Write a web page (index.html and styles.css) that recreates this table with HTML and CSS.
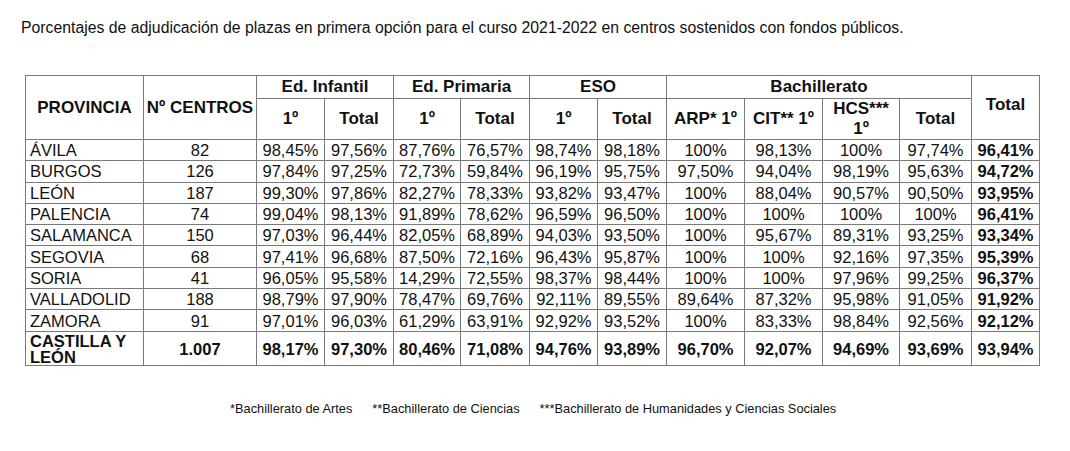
FILE: index.html
```html
<!DOCTYPE html>
<html lang="es">
<head>
<meta charset="utf-8">
<link rel="stylesheet" href="styles.css">
</head>
<body>
<p class="title">Porcentajes de adjudicación de plazas en primera opción para el curso 2021-2022 en centros sostenidos con fondos públicos.</p>
<table class="grid">
  <colgroup>
    <col class="c-prov"><col class="c-cen">
    <col class="c-a"><col class="c-b">
    <col class="c-c"><col class="c-d">
    <col class="c-e"><col class="c-f">
    <col class="c-g"><col class="c-h"><col class="c-i"><col class="c-j">
    <col class="c-k">
  </colgroup>
  <thead>
    <tr class="h1">
      <th rowspan="2">PROVINCIA</th>
      <th rowspan="2">Nº CENTROS</th>
      <th colspan="2">Ed. Infantil</th>
      <th colspan="2">Ed. Primaria</th>
      <th colspan="2">ESO</th>
      <th colspan="4">Bachillerato</th>
      <th rowspan="2" class="top">Total</th>
    </tr>
    <tr class="h2">
      <th>1º</th><th>Total</th>
      <th>1º</th><th>Total</th>
      <th>1º</th><th>Total</th>
      <th>ARP* 1º</th><th>CIT** 1º</th><th class="two">HCS***<br>1º</th><th>Total</th>
    </tr>
  </thead>
  <tbody>
    <tr><td class="name">ÁVILA</td><td>82</td><td>98,45%</td><td>97,56%</td><td>87,76%</td><td>76,57%</td><td>98,74%</td><td>98,18%</td><td>100%</td><td>98,13%</td><td>100%</td><td>97,74%</td><td class="b">96,41%</td></tr>
    <tr><td class="name">BURGOS</td><td>126</td><td>97,84%</td><td>97,25%</td><td>72,73%</td><td>59,84%</td><td>96,19%</td><td>95,75%</td><td>97,50%</td><td>94,04%</td><td>98,19%</td><td>95,63%</td><td class="b">94,72%</td></tr>
    <tr><td class="name">LEÓN</td><td>187</td><td>99,30%</td><td>97,86%</td><td>82,27%</td><td>78,33%</td><td>93,82%</td><td>93,47%</td><td>100%</td><td>88,04%</td><td>90,57%</td><td>90,50%</td><td class="b">93,95%</td></tr>
    <tr><td class="name">PALENCIA</td><td>74</td><td>99,04%</td><td>98,13%</td><td>91,89%</td><td>78,62%</td><td>96,59%</td><td>96,50%</td><td>100%</td><td>100%</td><td>100%</td><td>100%</td><td class="b">96,41%</td></tr>
    <tr><td class="name">SALAMANCA</td><td>150</td><td>97,03%</td><td>96,44%</td><td>82,05%</td><td>68,89%</td><td>94,03%</td><td>93,50%</td><td>100%</td><td>95,67%</td><td>89,31%</td><td>93,25%</td><td class="b">93,34%</td></tr>
    <tr><td class="name">SEGOVIA</td><td>68</td><td>97,41%</td><td>96,68%</td><td>87,50%</td><td>72,16%</td><td>96,43%</td><td>95,87%</td><td>100%</td><td>100%</td><td>92,16%</td><td>97,35%</td><td class="b">95,39%</td></tr>
    <tr><td class="name">SORIA</td><td>41</td><td>96,05%</td><td>95,58%</td><td>14,29%</td><td>72,55%</td><td>98,37%</td><td>98,44%</td><td>100%</td><td>100%</td><td>97,96%</td><td>99,25%</td><td class="b">96,37%</td></tr>
    <tr><td class="name">VALLADOLID</td><td>188</td><td>98,79%</td><td>97,90%</td><td>78,47%</td><td>69,76%</td><td>92,11%</td><td>89,55%</td><td>89,64%</td><td>87,32%</td><td>95,98%</td><td>91,05%</td><td class="b">91,92%</td></tr>
    <tr><td class="name">ZAMORA</td><td>91</td><td>97,01%</td><td>96,03%</td><td>61,29%</td><td>63,91%</td><td>92,92%</td><td>93,52%</td><td>100%</td><td>83,33%</td><td>98,84%</td><td>92,56%</td><td class="b">92,12%</td></tr>
    <tr class="sum"><td class="name">CASTILLA Y<br>LEÓN</td><td>1.007</td><td>98,17%</td><td>97,30%</td><td>80,46%</td><td>71,08%</td><td>94,76%</td><td>93,89%</td><td>96,70%</td><td>92,07%</td><td>94,69%</td><td>93,69%</td><td>93,94%</td></tr>
  </tbody>
</table>
<p class="notes"><span>*Bachillerato de Artes</span><span>**Bachillerato de Ciencias</span><span>***Bachillerato de Humanidades y Ciencias Sociales</span></p>
</body>
</html>
```
FILE: styles.css
```css
html, body {
  margin: 0;
  padding: 0;
  background: #ffffff;
  color: #111111;
  font-family: "Liberation Sans", Arial, sans-serif;
}
.title {
  margin: 0;
  padding: 19px 0 0 21px;
  font-size: 15.8px;
  line-height: 18px;
}
.grid {
  margin: 38px 0 0 25px;
  border-collapse: collapse;
  table-layout: fixed;
  width: 1014px;
  font-size: 16.5px;
  color: #111;
}
.c-prov { width: 118px; }
.c-cen { width: 113px; }
.c-a { width: 68px; }
.c-b { width: 69px; }
.c-c { width: 67px; }
.c-d { width: 69px; }
.c-e { width: 68px; }
.c-f { width: 69px; }
.c-g { width: 78px; }
.c-h { width: 78px; }
.c-i { width: 77px; }
.c-j { width: 72px; }
.c-k { width: 68px; }
.grid th, .grid td {
  border: 1.5px solid #7a7a7a;
  padding: 0;
  text-align: center;
  vertical-align: middle;
  white-space: nowrap;
}
.grid th {
  font-weight: bold;
  font-size: 17px;
  line-height: 18px;
}
.grid .h1 th { height: 22px; }
.grid .h2 th { height: 40px; }
.grid th.two { line-height: 20px; }
.grid th.top { padding-bottom: 6px; }
.grid td { height: 20.3px; line-height: 20px; }
.grid td.name { text-align: left; padding-left: 4px; }
.grid td.b { font-weight: bold; }
.grid .sum td { font-weight: bold; height: 30px; line-height: 16px; padding-top: 1px; }
.notes {
  margin: 35px 0 0 230px;
  font-size: 12.8px;
  display: flex;
  gap: 20px;
}
```
